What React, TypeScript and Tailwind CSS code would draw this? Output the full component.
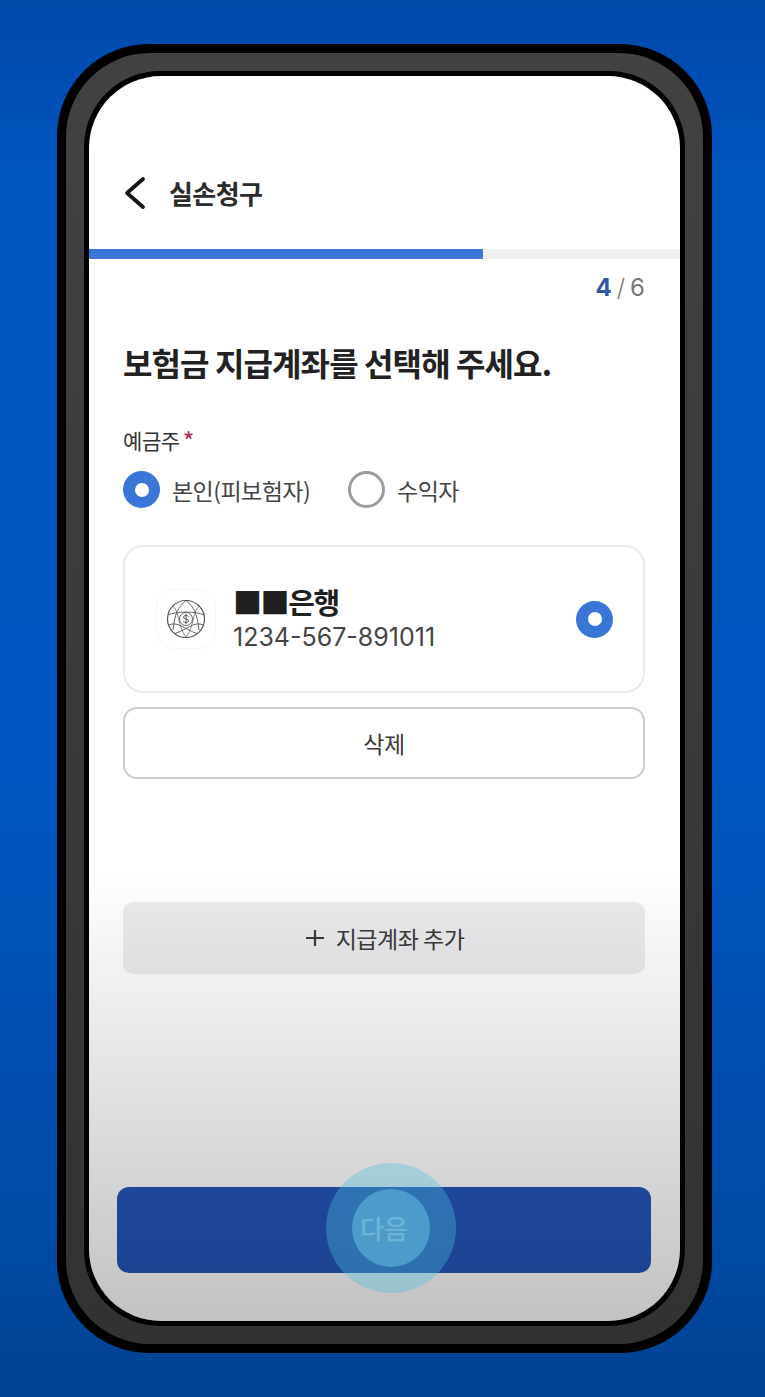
import React from 'react';

const FONT = "font-['Noto_Sans_CJK_KR','Noto_Sans',sans-serif]";

const Radio: React.FC<{ checked?: boolean; label?: string }> = ({ checked, label }) => (
  <div className="flex items-center gap-[12px]">
    {checked ? (
      <div className="w-[37px] h-[37px] rounded-full bg-[#3a75d8] flex items-center justify-center">
        <div className="w-[14px] h-[14px] rounded-full bg-white" />
      </div>
    ) : (
      <div className="w-[37px] h-[37px] rounded-full border-[3px] border-[#9c9c9c] bg-white" />
    )}
    {label && <span className="text-[23px] leading-[32px] tracking-[-0.55px] text-[#444444]">{label}</span>}
  </div>
);

const BankLogo = () => (
  <svg width="40" height="40" viewBox="0 0 40 40" fill="none" stroke="#555555" strokeWidth="0.9">
    <circle cx="20" cy="20" r="18.5" strokeWidth="1.2" />
    <circle cx="20" cy="20" r="6.5" />
    <path d="M20 1.5C12 8 9 14 7 31M20 1.5C28 8 31 14 33 31" />
    <path d="M2 16C10 12 30 12 38 16M2.5 26C12 22 18 30 31 34.5M37.5 26C28 22 22 30 9 34.5" />
    <path d="M7 7C14 14 11 25 20 38.5M33 7C26 14 29 25 20 38.5" strokeWidth="0.7" />
    <path d="M22.5 17.5C21.5 16 17.5 16 17.5 18.2C17.5 20.5 22.5 19.5 22.5 21.8C22.5 24 18.5 24 17.5 22.5M20 15V25" strokeWidth="1" />
  </svg>
);

export default function App() {
  return (
    <div className={`w-[765px] h-[1397px] overflow-hidden pl-[57px] pt-[44px] bg-[linear-gradient(180deg,#0049a9_0%,#0054bd_12%,#0055c0_55%,#004da9_85%,#004291_100%)] ${FONT}`}>
      {/* Phone frame */}
      <div className="w-[655px] h-[1309px] rounded-[92px] bg-black p-[9px]">
        <div className="w-full h-full rounded-[84px] bg-gradient-to-b from-[#424242] to-[#323232] p-[18px]">
          <div className="w-full h-full rounded-[76px] bg-black p-[5px]">
            <div className="relative w-full h-full rounded-[72px] bg-white overflow-hidden flex flex-col">
              {/* Header */}
              <div className="flex items-center h-[173px] pt-[61px] pl-[34px] gap-[22px] shrink-0">
                <svg width="24" height="34" viewBox="0 0 24 34" fill="none" stroke="#141414" strokeWidth="3.8" strokeLinecap="round" strokeLinejoin="round">
                  <path d="M20 3L4 17L20 31" />
                </svg>
                <h1 className="text-[26px] leading-[36px] font-bold tracking-[-0.6px] text-[#2b2b2b]">실손청구</h1>
              </div>

              {/* Progress */}
              <div className="h-[10px] bg-[#f0f0f0] shrink-0">
                <div className="h-full w-[394px] bg-[#3a75d8]" />
              </div>

              <div className="flex justify-end items-center h-[38px] mt-[10px] pr-[35px] text-[24px] leading-[34px] text-[#777777] font-['Inter',sans-serif] shrink-0">
                <span className="font-bold text-[#2f57a8]">4</span>
                <span className="mx-[5px] font-light">/</span>
                <span>6</span>
              </div>

              {/* Content */}
              <div className="pl-[34px] pr-[35px] flex flex-col">
                <h2 className="mt-[33px] text-[32px] leading-[44px] font-bold tracking-[-0.9px] text-[#222222]">
                  보험금 지급계좌를 선택해 주세요.
                </h2>

                <div className="mt-[41px] flex items-center text-[21px] leading-[30px] tracking-[-0.4px] text-[#333333]">
                  예금주<span className="ml-[3px] text-[25px] leading-[30px] text-[#b5265a]">*</span>
                </div>

                <div className="mt-[16px] flex items-center gap-[38px]">
                  <Radio checked label="본인(피보험자)" />
                  <Radio label="수익자" />
                </div>

                {/* Account card */}
                <div className="mt-[37px] h-[148px] rounded-[20px] border-2 border-[#ebebeb] bg-white flex items-center pl-[31px] pr-[30px]">
                  <div className="w-[60px] h-[60px] rounded-[18px] border border-[#f7f7f7] flex items-center justify-center shrink-0">
                    <BankLogo />
                  </div>
                  <div className="ml-[17px] flex-1 min-w-0 pb-[2px]">
                    <p className="text-[29px] leading-[38px] font-bold tracking-[-1.4px] text-[#1f1f1f]">■■은행</p>
                    <p className="text-[25px] leading-[34px] font-['Inter',sans-serif] text-[#444444]">1234-567-891011</p>
                  </div>
                  <Radio checked />
                </div>

                <button className="mt-[14px] h-[72px] rounded-[14px] border-2 border-[#cdcdcd] bg-white text-[23px] tracking-[-0.5px] text-[#3a3a3a]">
                  삭제
                </button>

                <button className="mt-[123px] h-[72px] rounded-[10px] bg-[#ebebed] flex items-center justify-center gap-[10px] text-[23px] tracking-[-0.5px] text-[#3a3a3a]">
                  <svg width="22" height="22" viewBox="0 0 22 22" stroke="#3a3a3a" strokeWidth="2.2">
                    <path d="M11 3V19M2 11H20" />
                  </svg>
                  지급계좌 추가
                </button>
              </div>

              {/* Next button */}
              <button className="mt-auto mb-[48px] ml-[28px] mr-[29px] h-[86px] pb-[5px] rounded-[12px] bg-[#2456ba] text-[26px] font-medium text-white/70 shrink-0">
                다음
              </button>

              {/* Dim over lower part of the screen */}
              <div className="absolute inset-x-0 top-[795px] bottom-0 pointer-events-none bg-gradient-to-b from-black/0 to-black/[0.24]" />

              {/* Touch ripple */}
              <div className="absolute left-[237px] top-[1087px] w-[130px] h-[130px] rounded-full bg-[#4ebee0]/[0.36] flex items-center justify-center pointer-events-none">
                <div className="w-[78px] h-[78px] rounded-full bg-[#63b8dc]/[0.6]" />
              </div>
            </div>
          </div>
        </div>
      </div>
    </div>
  );
}
